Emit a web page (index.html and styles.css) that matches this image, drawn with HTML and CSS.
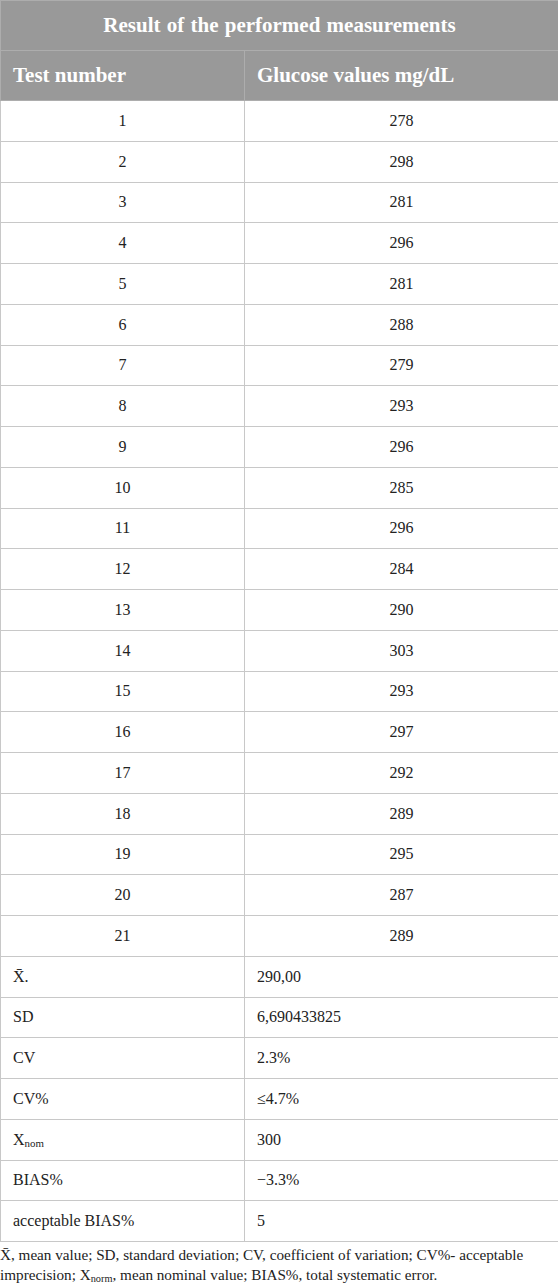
FILE: index.html
```html
<!DOCTYPE html>
<html lang="en">
<head>
<meta charset="utf-8">
<title>Result of the performed measurements</title>
<link rel="stylesheet" href="styles.css">
</head>
<body>
<div class="wrap">
<table class="data">
  <colgroup><col class="col-a"><col class="col-b"></colgroup>
  <thead>
    <tr class="title-row"><th colspan="2" class="title">Result of the performed measurements</th></tr>
    <tr class="head-row"><th class="c1">Test number</th><th class="c2">Glucose values mg/dL</th></tr>
  </thead>
  <tbody>
    <tr><td class="center">1</td><td class="center">278</td></tr>
    <tr><td class="center">2</td><td class="center">298</td></tr>
    <tr><td class="center">3</td><td class="center">281</td></tr>
    <tr><td class="center">4</td><td class="center">296</td></tr>
    <tr><td class="center">5</td><td class="center">281</td></tr>
    <tr><td class="center">6</td><td class="center">288</td></tr>
    <tr><td class="center">7</td><td class="center">279</td></tr>
    <tr><td class="center">8</td><td class="center">293</td></tr>
    <tr><td class="center">9</td><td class="center">296</td></tr>
    <tr><td class="center">10</td><td class="center">285</td></tr>
    <tr><td class="center">11</td><td class="center">296</td></tr>
    <tr><td class="center">12</td><td class="center">284</td></tr>
    <tr><td class="center">13</td><td class="center">290</td></tr>
    <tr><td class="center">14</td><td class="center">303</td></tr>
    <tr><td class="center">15</td><td class="center">293</td></tr>
    <tr><td class="center">16</td><td class="center">297</td></tr>
    <tr><td class="center">17</td><td class="center">292</td></tr>
    <tr><td class="center">18</td><td class="center">289</td></tr>
    <tr><td class="center">19</td><td class="center">295</td></tr>
    <tr><td class="center">20</td><td class="center">287</td></tr>
    <tr><td class="center">21</td><td class="center">289</td></tr>
    <tr><td>X&#772;.</td><td>290,00</td></tr>
    <tr><td>SD</td><td>6,690433825</td></tr>
    <tr><td>CV</td><td>2.3%</td></tr>
    <tr><td>CV%</td><td>≤4.7%</td></tr>
    <tr><td>X<sub>nom</sub></td><td>300</td></tr>
    <tr><td>BIAS%</td><td>−3.3%</td></tr>
    <tr><td>acceptable BIAS%</td><td>5</td></tr>
  </tbody>
</table>
<p class="note">X&#772;, mean value; SD, standard deviation; CV, coefficient of variation; CV%- acceptable imprecision; X<sub>norm</sub>, mean nominal value; BIAS%, total systematic error.</p>
</div>
</body>
</html>
```

FILE: styles.css
```css
html, body {
  margin: 0;
  padding: 0;
  background: #ffffff;
}

body {
  font-family: "Liberation Serif", "Times New Roman", serif;
  color: #222222;
}

.wrap {
  width: 558px;
}

.data {
  width: 558px;
  border-collapse: collapse;
  table-layout: fixed;
  border: 1px solid #c8c8c8;
}

.col-a {
  width: 244px;
}

.col-b {
  width: 314px;
}

.data th {
  background: #999999;
  color: #ffffff;
  font-weight: bold;
  font-size: 21px;
  border: 1px solid #adadad;
  height: 50px;
  padding: 0 12px;
  box-sizing: border-box;
}

.data .title {
  text-align: center;
  word-spacing: 1px;
}

.data .c1,
.data .c2 {
  text-align: left;
}

.data td {
  font-size: 16px;
  height: 40.75px;
  padding: 0 12px;
  border: 1px solid #c8c8c8;
  box-sizing: border-box;
  vertical-align: middle;
}

.data td.center {
  text-align: center;
}

sub {
  font-size: 0.68em;
  line-height: 0;
  vertical-align: -0.22em;
}

.note {
  margin: 0;
  padding-top: 3px;
  font-size: 15.2px;
  line-height: 20px;
  color: #222222;
}
```
